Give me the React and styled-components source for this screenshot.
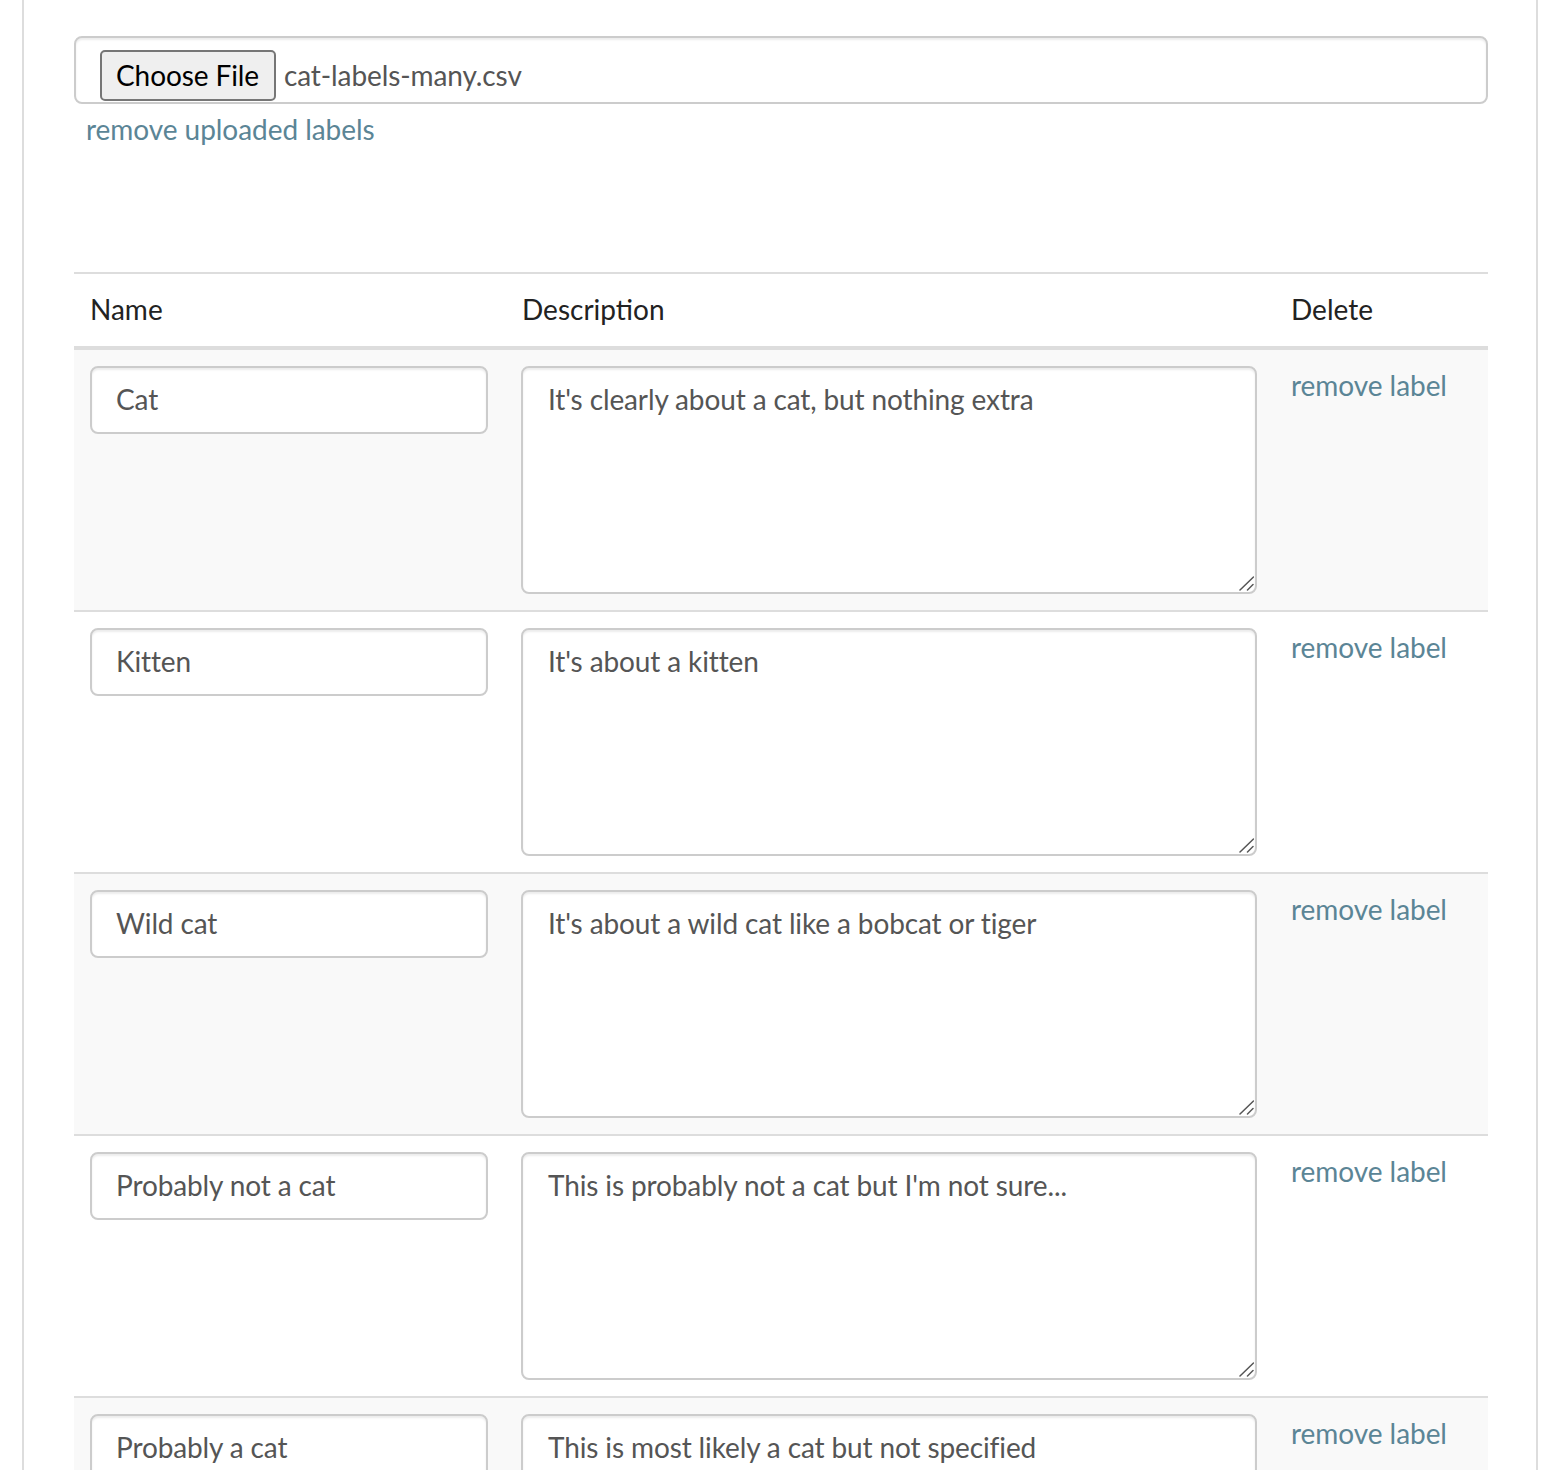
import React from "react";
import styled, { createGlobalStyle } from "styled-components";

const Global = createGlobalStyle`
  html, body { margin: 0; padding: 0; background: #fff; }
  body { font-family: Lato, "Open Sans", sans-serif; font-size: 28px; line-height: 40px; color: #333; }
  * { box-sizing: border-box; }
`;

const Page = styled.div`
  margin-left: 22px;
  width: 1516px;
  min-height: 1470px;
  border-left: 2px solid #ddd;
  border-right: 2px solid #ddd;
  padding: 36px 48px 40px 50px;
`;

const FileBox = styled.div`
  display: flex;
  align-items: flex-start;
  height: 68px;
  border: 2px solid #ccc;
  border-radius: 8px;
  box-shadow: inset 0 2px 2px rgba(0,0,0,0.075);
  padding: 12px 24px 0 24px;
  overflow: visible;
`;

const ChooseButton = styled.button`
  font-family: Lato, "Open Sans", sans-serif;
  font-size: 28px;
  letter-spacing: -0.1px;
  line-height: 47px;
  height: 51px;
  padding: 0 15px 0 14px;
  color: #000;
  background: #efefef;
  border: 2px solid #767676;
  border-radius: 5px;
  margin-right: 8px;
`;

const FileName = styled.span`
  color: #555;
  font-size: 28px;
  letter-spacing: -0.1px;
  line-height: 50px;
`;

const Link = styled.a`
  color: #5b8596;
  text-decoration: none;
  cursor: pointer;
  letter-spacing: -0.05px;
`;

const HelpLine = styled.div`
  margin-top: 5px;
  padding-left: 12px;
  height: 41px;
`;

const Table = styled.table`
  margin-top: 122px;
  width: 1414px;
  table-layout: fixed;
  border-collapse: collapse;
  border-spacing: 0;
`;

const HeadRow = styled.tr`
  border-top: 2px solid #ddd;
  border-bottom: 4px solid #ddd;
`;

const Th = styled.th`
  text-align: left;
  font-weight: 400;
  color: #222;
  padding: 15px 16px 17px 16px;
  line-height: 40px;
`;

const Row = styled.tr`
  background: ${(p) => (p.$striped ? "#f9f9f9" : "#fff")};
  border-bottom: 2px solid #ddd;
`;

const Td = styled.td`
  vertical-align: top;
  padding: 16px;
  line-height: 40px;
`;

const DeleteLink = styled(Link)`
  display: block;
  margin-top: -1px;
`;

const fieldStyle = `
  display: block;
  font-family: Lato, "Open Sans", sans-serif;
  font-size: 28px;
  letter-spacing: -0.12px;
  line-height: 40px;
  color: #555;
  background: #fff;
  border: 2px solid #ccc;
  border-radius: 8px;
  box-shadow: inset 0 2px 2px rgba(0,0,0,0.075);
  outline: none;
`;

const NameInput = styled.input`
  ${fieldStyle}
  width: 398px;
  height: 68px;
  padding: 11px 24px 13px 24px;
`;

const AreaWrap = styled.div`
  position: relative;
  width: 736px;
  margin-left: -1px;
`;

const DescArea = styled.textarea`
  ${fieldStyle}
  width: 100%;
  height: 228px;
  padding: 11px 24px 13px 25px;
  resize: none;
`;

const Grip = styled.svg`
  position: absolute;
  right: 3px;
  bottom: 3px;
  width: 16px;
  height: 16px;
  pointer-events: none;
`;

const labels = [
  ["Cat", "It's clearly about a cat, but nothing extra"],
  ["Kitten", "It's about a kitten"],
  ["Wild cat", "It's about a wild cat like a bobcat or tiger"],
  ["Probably not a cat", "This is probably not a cat but I'm not sure..."],
  ["Probably a cat", "This is most likely a cat but not specified"],
];

export default function App() {
  return (
    <>
      <Global />
      <Page>
        <FileBox>
          <ChooseButton type="button">Choose File</ChooseButton>
          <FileName>cat-labels-many.csv</FileName>
        </FileBox>
        <HelpLine>
          <Link>remove uploaded labels</Link>
        </HelpLine>
        <Table>
          <colgroup>
            <col style={{ width: 432 }} />
            <col style={{ width: 769 }} />
            <col style={{ width: 213 }} />
          </colgroup>
          <thead>
            <HeadRow>
              <Th>Name</Th>
              <Th>Description</Th>
              <Th>Delete</Th>
            </HeadRow>
          </thead>
          <tbody>
            {labels.map(([name, desc], i) => (
              <Row key={i} $striped={i % 2 === 0}>
                <Td>
                  <NameInput defaultValue={name} />
                </Td>
                <Td>
                  <AreaWrap>
                    <DescArea defaultValue={desc} />
                    <Grip viewBox="0 0 16 16">
                      <line x1="2" y1="15" x2="15.5" y2="2" stroke="#555" strokeWidth="1.5" strokeLinecap="round" />
                      <line x1="9.5" y1="15" x2="15" y2="9.5" stroke="#555" strokeWidth="1.5" strokeLinecap="round" />
                    </Grip>
                  </AreaWrap>
                </Td>
                <Td>
                  <DeleteLink>remove label</DeleteLink>
                </Td>
              </Row>
            ))}
          </tbody>
        </Table>
      </Page>
    </>
  );
}
